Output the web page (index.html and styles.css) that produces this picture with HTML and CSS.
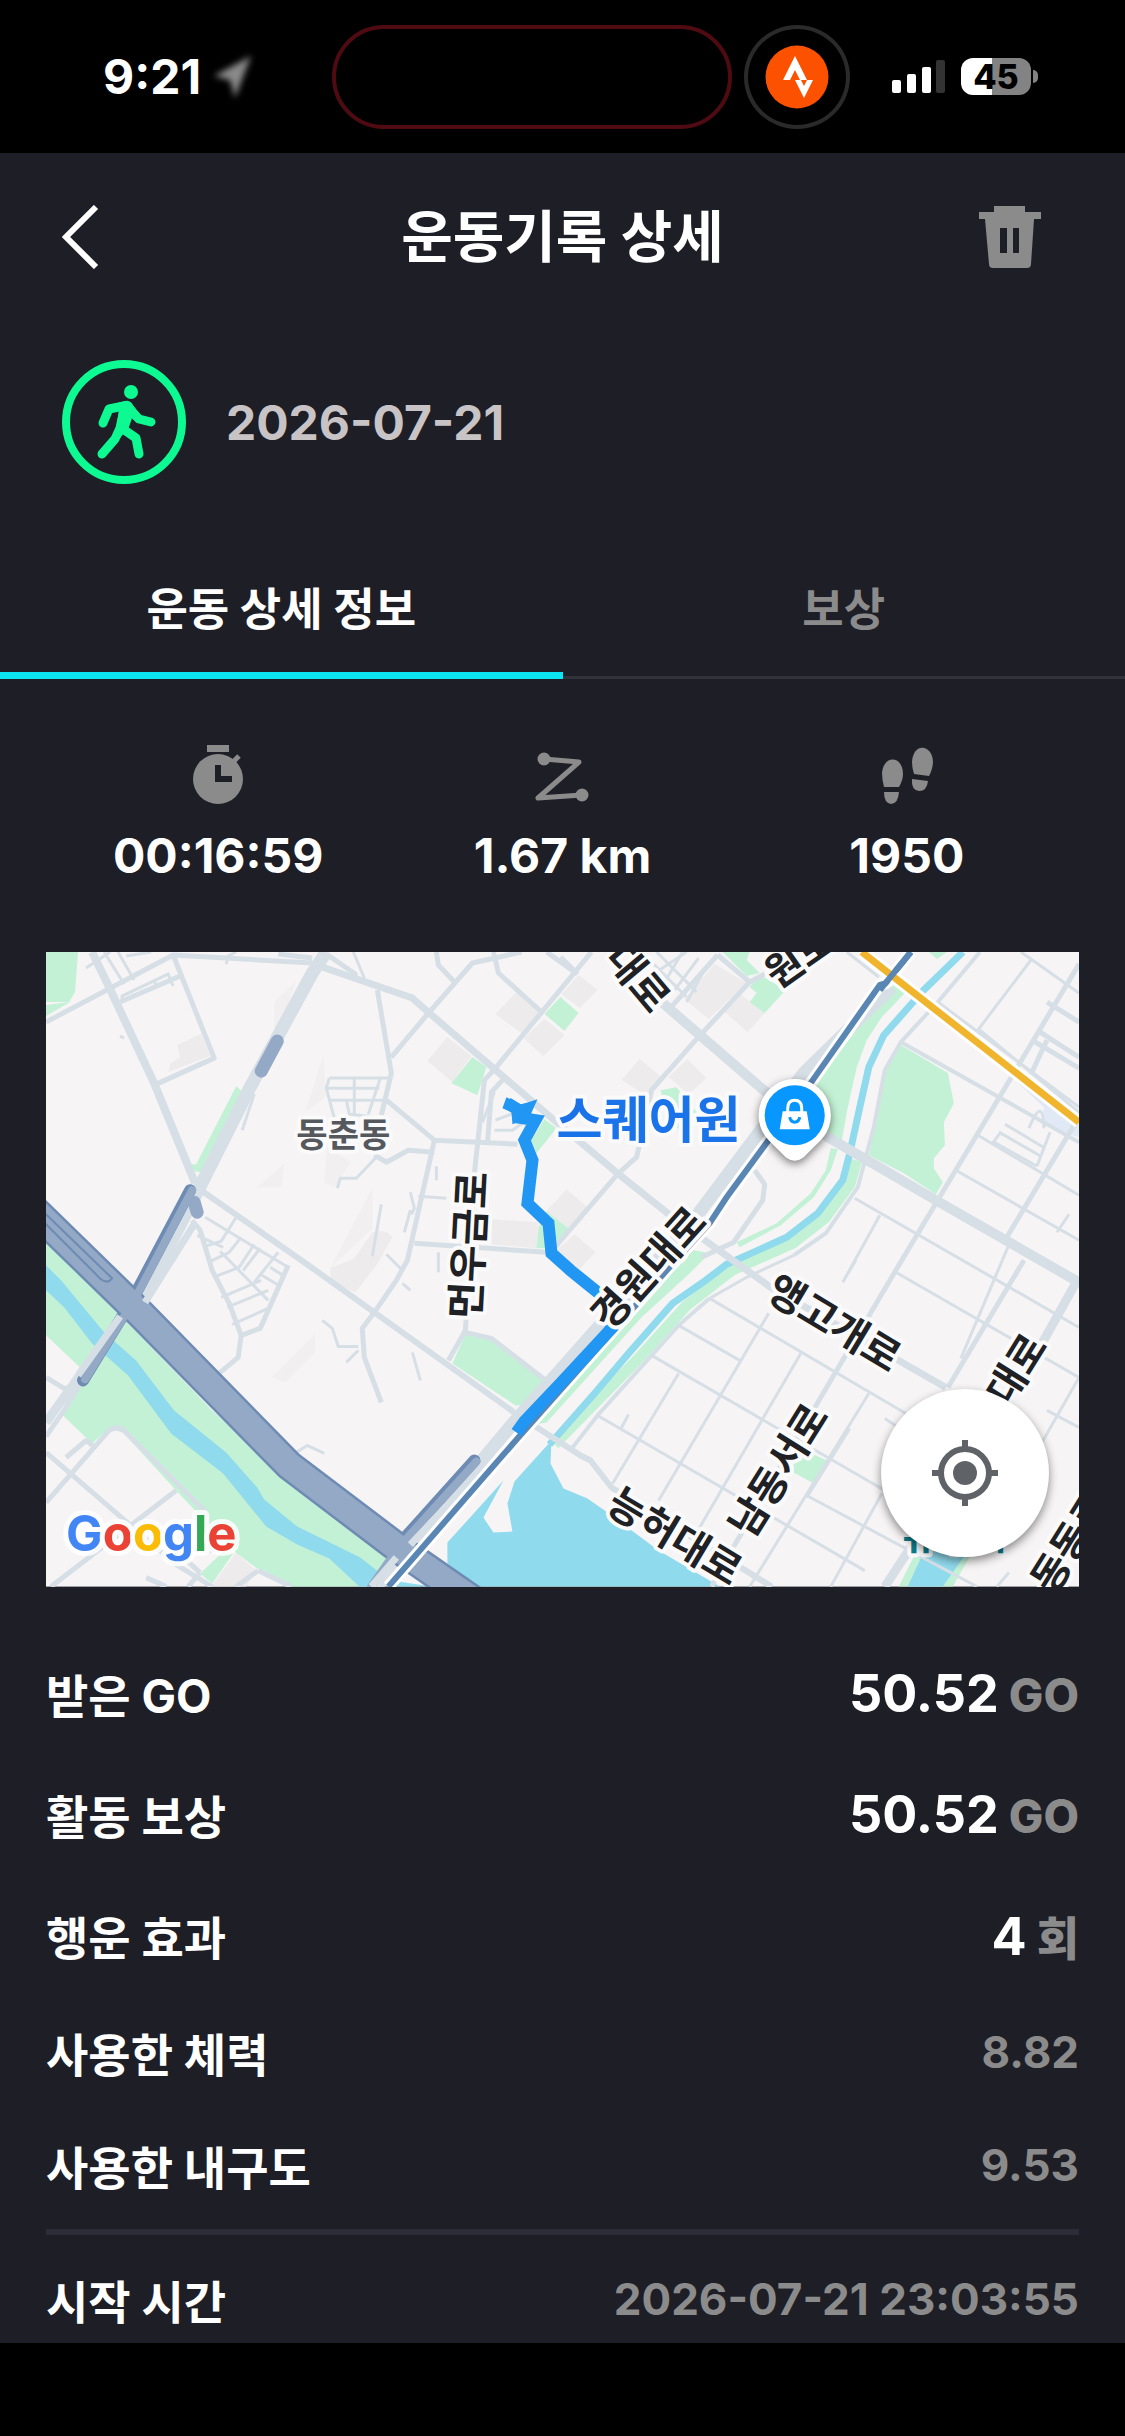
FILE: index.html
```html
<!DOCTYPE html>
<html lang="ko">
  <head>
    <meta charset="UTF-8" />
    <meta name="viewport" content="width=device-width, initial-scale=1.0" />
    <title>운동기록 상세</title>
    <link rel="stylesheet" href="styles.css">
  </head>
  <body>
    <div class="status-bar">
      <div class="clock">
        <span>9:21</span>
        <svg class="location" width="44" height="48" viewBox="0 0 44 48">
          <path d="M40 3L24 45L19 27L3 23Z" fill="#8a8a8a" />
        </svg>
      </div>
      <div class="island-group">
        <div class="island"></div>
        <div class="live-activity">
          <svg width="64" height="64" viewBox="0 0 64 64">
            <circle cx="32" cy="32" r="31.5" fill="#fc5200" />
            <path d="M30 11L42 35H35L30 25L25 35H18Z" fill="#fff" />
            <path d="M30 35H36L39 41L42 35H48L39 53Z" fill="#fff" />
          </svg>
        </div>
      </div>
      <div class="indicators">
        <svg width="54" height="36" viewBox="0 0 54 36">
          <rect x="0" y="21" width="9" height="13" rx="2" fill="#fff" />
          <rect x="15" y="15" width="9" height="19" rx="2" fill="#fff" />
          <rect x="30" y="8" width="9" height="26" rx="2" fill="#fff" />
          <rect x="44" y="1" width="9" height="33" rx="2" fill="#333" />
        </svg>
        <div class="battery">45</div>
      </div>
    </div>

    <main class="screen">
      <header class="header">
        <button class="icon-btn" aria-label="뒤로">
          <svg width="62" height="64" viewBox="0 0 62 64">
            <path d="M34 2L4 32L34 62" fill="none" stroke="#fff" stroke-width="6" />
          </svg>
        </button>
        <h1>운동기록 상세</h1>
        <button class="icon-btn delete-btn" aria-label="삭제">
          <svg width="62" height="62" viewBox="0 0 62 62">
            <path d="M15 0H46V6H62V13H55L52 58Q52 62 48 62H14Q10 62 10 58L6 13H0V6H15ZM21 22V47H28V22ZM34 22V47H40V22Z" fill="#8b8b8b" fill-rule="evenodd" />
          </svg>
        </button>
      </header>

      <section class="activity">
        <svg width="124" height="124" viewBox="0 0 124 124">
          <circle cx="62" cy="62" r="58" fill="none" stroke="#0df992" stroke-width="8" />
          <circle cx="69" cy="32" r="7" fill="#0df992" />
          <path d="M48 45L63 41Q68 40 71 45L77 53L70 58L67 67L58 78L54 70L57 50L48 52Z" fill="#0df992" />
          <g fill="none" stroke="#0df992" stroke-width="9" stroke-linecap="round" stroke-linejoin="round">
            <path d="M62 46L47 49L41 63" />
            <path d="M66 48L77 59L89 62" />
            <path d="M62 50L58 68L53 79L40 94" />
            <path d="M61 69L74 78L77 94" />
          </g>
        </svg>
        <time class="date" datetime="2026-07-21">2026-07-21</time>
      </section>

      <nav class="tabs">
        <button class="tab active">운동 상세 정보</button>
        <button class="tab">보상</button>
      </nav>

      <section class="stats">
        <div class="stat">
          <svg width="64" height="64" viewBox="0 0 64 64" fill="#8b8b8b">
            <rect x="21" y="3" width="22" height="7" />
            <path d="M46 21L53 14" stroke="#8b8b8b" stroke-width="5" />
            <circle cx="32" cy="37" r="25" />
            <path d="M29 23H35V34H46V40H29Z" fill="#1e1e26" />
          </svg>
          <span>00:16:59</span>
        </div>
        <div class="stat">
          <svg width="64" height="64" viewBox="0 0 64 64" fill="#8b8b8b">
            <path d="M14 17L49 20L8 56L52 53" fill="none" stroke="#8b8b8b" stroke-width="5" stroke-linejoin="round" />
            <circle cx="14" cy="17" r="6.5" />
            <circle cx="52" cy="53" r="6.5" />
          </svg>
          <span>1.67 km</span>
        </div>
        <div class="stat">
          <svg width="64" height="64" viewBox="0 0 64 64" fill="#8b8b8b">
            <path d="M9 45Q7 37 7 31C8 13 28 13 28 32Q28 38 24 45Z" />
            <path d="M9 50H24Q23 62 16 62Q9 61 9 50Z" />
            <path d="M39 32Q37 26 37 20C38 0 58 2 58 21Q57 29 54 34Z" />
            <path d="M37 37L53 39Q52 49 44 49Q36 48 37 37Z" />
          </svg>
          <span>1950</span>
        </div>
      </section>

      <section class="map">
        <svg class="map-canvas" viewBox="0 0 1032 634" role="img" aria-label="운동 경로 지도">
          <rect width="1032" height="634" fill="#f6f4f5" />

          <!-- buildings and hills -->
          <g fill="#edebec">
            <path d="M470 40L494 63L476 82L449 62ZM498 67L518 83L497 104L477 86ZM401 85L425 104L406 130L381 109ZM131 93L155 82L164 104L122 120L124 112L134 105Z" />
            <path d="M532 23L551 38L533 56L515 42ZM668 12L700 31L662 67L638 47ZM695 43L718 61L701 80L678 60ZM593 107L615 125L599 143L575 128ZM641 107L660 126L642 142L622 125Z" />
            <path d="M520 237L541 255L522 276L500 259ZM528 282L549 300L532 318L508 300ZM445 267L492 270L490 296L445 292Z" />
            <path d="M326 280Q340 276 346 285L331 312L309 340L285 330L284 316L308 306ZM190 600L210 618L200 634L165 634Z" />
          </g>
          <g fill="#f1eff0">
            <path d="M277 104L280 144L259 160ZM249 30L228 50V80L240 60ZM238 212L235 235H211ZM281 195L304 210L288 235L278 230ZM326 236L326 276L284 316ZM269 382V400L239 430L226 425Z" />
          </g>
          <path d="M965 125L1032 158V185L1014 180L994 168L997 155Z" fill="#e1e8f6" />

          <!-- parks -->
          <g fill="#c3f1d5">
            <path d="M0 0H32L29 40L23 50H0ZM0 53L24 50L0 64Z" />
            <path d="M190 134L197 140L154 220L144 218L109 136L142 212L150 212Z" />
            <path d="M514 45L532 61L518 79L498 62ZM426 105L440 115L431 143L405 131ZM498 167L510 176L490 201L485 188ZM500 259L523 277L504 296H490L492 275Z" />
            <path d="M676 0H703L700 8L713 21L700 24ZM707 30L717 25L739 38L718 61L703 50L710 41L703 35ZM614 138L630 135L650 160L640 185L620 165Z" />
            <path d="M849 30L859 40L835 65L820 88L810 115L801 155L795 188L781 181L767 131ZM882 0H900L890 7Z" />
            <path d="M784 196L791 197L784 218L767 245L734 273L693 295L690 290L730 271L764 241L779 218Z" />
            <path d="M854 93L901 121L907 151L897 170L898 193L887 206V216L896 230L889 242L857 221L822 203L827 178L838 118Z" />
            <path d="M419 382L445 388L499 428L476 453H469L406 411ZM747 508L767 502L780 508L767 531L747 520Z" />
            <path d="M874 590L925 600L906 634H852Z" />
            <path d="M0 280L73 361L87 376L166 458L239 526L340 603L333 634H245L218 618L211 616L187 598L130 538L77 480L63 476L46 491L15 461L34 415L0 383ZM154 621L166 631L187 601L178 598Z" />
            <path d="M647 298L663 301L642 322L595 365L565 398L500 470L488 472L565 383L625 315Z" />
          </g>
          <path d="M810 208L803 232L778 266L746 291L685 318L640 353L592 406L508 492" fill="none" stroke="#c3f1d5" stroke-width="11" />

          <!-- water -->
          <g fill="#90daed">
            <path d="M0 313L15 328L58 380L90 408L128 458L180 500L211 535L218 547L251 574L314 605L333 620L325 634H313L283 606L251 592L220 574L177 521L125 481L82 423L46 391L18 355L0 338Z" />
            <path d="M505 488L504 511L517 536L541 546L561 560L612 598L673 634H430L401 611V590L457 528L437 565L447 580L466 579L461 551L468 529ZM352 629L385 634H350Z" />
            <path d="M881 590L920 600L896 634H861Z" />
          </g>
          <path d="M916 0L877 38L837 83L822 115L813 155L803 201L796 228L771 261L740 285L680 312L659 328L626 351L582 401L548 441L503 492" fill="none" stroke="#90daed" stroke-width="7" />

          <!-- minor streets -->
          <g fill="none" stroke="#d7dfe6" stroke-width="3">
            <path d="M283 126H345M280 136H333M283 148H340M308 126V162M283 126L280 136L288 166M334 126L322 162M300 148L303 162L322 164" />
            <path d="M159 265L242 315M151 283L177 295M159 294L175 289L190 265M162 310L183 300L195 285M167 325L193 315L208 292M175 345L215 328M181 355L222 338M186 372L222 356M174 299L222 348M197 318L214 296M208 330L232 300M214 322L234 334M224 315L238 324" />
            <path d="M58 0L78 32M72 0L88 28M40 16L64 0M80 4L105 0M76 50V44L122 22L127 34M108 29L112 36M180 12L182 4L190 0M307 0L318 26M196 178L208 142M390 228V214M335 252L326 304M364 258L358 280M291 236L294 226L310 226L330 205M372 244L400 246M364 240L368 256L365 262" />
            <path d="M276 368L286 376L292 394H312M300 410L312 398M250 500L261 493L278 501M366 400L374 428M340 302L356 318M356 331L364 338M74 84L78 86M392 300V320" />
            <path d="M600 5L640 45M610 0L650 40M636 0L618 30M652 6L628 38M660 14L640 50M610 20L640 0M448 140L436 170M449 168L475 158M448 178H466L480 168" />
            <path d="M984 8L931 78M974 0L1032 41M891 50L1032 155M933 78L1032 160M800 0L832 25M817 0L850 20M954 180L945 192M947 190L990 214M952 180L994 204M958 172L998 196M990 214L1003 180M982 176Q996 142 997 176" />
            <path d="M808 246L1032 375M663 346L859 461M632 373L693 408M605 403L838 538M551 463L818 618M909 218L1032 288M849 320L1032 425M931 183L1032 243M853 476L838 466M693 615L725 634M760 543L930 634M1000 458L1032 475" />
            <path d="M833 263L796 330M722 361L612 548M754 401L653 575M822 441L703 634M632 421L566 531M835 541L784 634M1032 425L995 490M582 462L574 477M803 476L760 545M963 290L914 406M1022 262L1010 280M809 308L796 330M747 303L700 325L663 346M962 620L950 634" />
          </g>

          <!-- streets -->
          <g fill="none" stroke="#d7dfe6" stroke-width="5" stroke-linejoin="round">
            <path d="M0 70L127 3L266 11M127 3L168 106L108 133M232 2L266 6M280 2L309 22V28M74 50L134 24" />
            <path d="M331 38L345 121L335 163M475 0L426 11L382 61L345 105M390 0L392 13L409 31M447 0L452 21L495 60M500 0L531 22M545 0L449 116L438 128L428 221L419 378L402 408" />
            <path d="M340 148L388 188L471 192M388 188L361 308L350 328L328 360L316 376L318 405L335 450M388 200L362 198L340 210L328 203M368 291L500 300M441 192L445 140L456 128" />
            <path d="M242 313L214 376L195 383L192 405L168 425M146 268L154 278L166 318L183 351L195 383" />
            <path d="M703 30L649 88L605 138L590 205L571 222L504 300M671 3L703 30L718 22M671 3L620 60M514 5L531 22M708 218L718 232L716 248L687 290L655 305" />
            <path d="M933 0L891 50L854 90L838 118L827 175L811 235L779 281L747 303M663 346L632 373L551 463L526 495M854 90L1032 190" stroke-width="4" />
            <path d="M1032 12L849 318L771 450L683 601L665 634M1032 165L958 288M977 308L901 435M1000 50L1032 70M990 78L1032 105M985 88L1032 116M1000 88L984 122" />
            <path d="M419 380L445 386L502 430M0 484L20 455L34 431M0 425L18 436L34 434M0 550L63 478Q72 472 80 480L160 560L166 600M0 500L130 612L166 634M130 538L5 634M154 620L110 580M212 618L190 634M212 618L245 634M100 625L120 634M154 620L142 634M20 505L40 488L48 494" />
          </g>

          <!-- main roads -->
          <g fill="none" stroke="#d7dfe6" stroke-width="8" stroke-linejoin="round">
            <path d="M46 0L63 35L108 131L149 231" />
            <path d="M280 0L266 21L204 135L152 238L96 345" stroke-width="13" />
            <path d="M270 13L366 46L383 61L510 170L571 221L626 265L724 335L899 435" stroke-width="7" />
            <path d="M152 236L265 315L472 463L534 503L544 508L565 535L725 634" stroke-width="6" />
            <path d="M615 50L717 138L781 185L889 248L1032 330" stroke-width="10" />
            <path d="M845 35L757 121L649 265L469 468L330 634" stroke-width="13" />
            <path d="M1032 325L980 418L838 634" stroke-width="9" />
            <path d="M76 364L0 470" stroke-width="9" />
          </g>

          <!-- expressway -->
          <g fill="none" stroke-linecap="round" stroke-linejoin="round">
            <path d="M-20 250L94 361L243 513L355 598L430 650" stroke="#6e8bb3" stroke-width="31" />
            <path d="M144 238L86 348L37 428M428 508L357 587" stroke="#6e8bb3" stroke-width="12" />
            <path d="M148 250L151 260M231 89L215 119" stroke="#93a9c6" stroke-width="13" />
            <path d="M-20 250L94 361L243 513L355 598L430 650" stroke="#93a9c6" stroke-width="26" />
            <path d="M146 238L88 348L39 427M430 509L352 595L325 634" stroke="#93a9c6" stroke-width="8" />
            <path d="M-10 262L50 322Q60 334 66 326L0 262" stroke="#6e8bb3" stroke-width="2" />
            <path d="M148 272L99 350M74 364L32 423M350 605L325 634M432 520L364 592" stroke="#d7dfe6" stroke-width="7" stroke-linecap="butt" />
          </g>

          <!-- railway and highway -->
          <g fill="none">
            <path d="M864 0L839 31L833 33L766 128L680 245L663 271L622 316L471 486L342 634" stroke="#fff" stroke-width="12" />
            <path d="M864 0L839 31L833 33L766 128L680 245L663 271L622 316L471 486L342 634" stroke="#5a86b4" stroke-width="6" />
            <path d="M815 0L1032 170" stroke="#fff" stroke-width="13" />
            <path d="M815 0L1032 170" stroke="#f0b52d" stroke-width="7" />
            <path d="M864 0L833 38" stroke="#5a86b4" stroke-width="6" />
          </g>

          <!-- walked route -->
          <path d="M461 151L474 159L480 157L476 166L489 168L478 188L486 208L481 251L502 271L505 301L524 318L556 344L565 376L514 431L478 469L470 480" fill="none" stroke="#2196f3" stroke-width="12" />
          <path d="M460 145L474 152L484 150L478 158L492 165L476 168L466 172L465 160L456 156Z" fill="#2196f3" />

          <g class="map-labels">
            <text class="area" x="297" y="195">동춘동</text>
            <text transform="translate(423 293) rotate(-87)" y="14">먼우금로</text>
            <text transform="translate(602 316) rotate(-48)" y="14">경원대로</text>
            <text transform="translate(787 371) rotate(31)" y="14">앵고개로</text>
            <text transform="translate(732 518) rotate(-58)" y="14">남동서로</text>
            <text transform="translate(628 584) rotate(31)" y="14">능허대로</text>
            <text transform="translate(970 417) rotate(-58)" y="14">대로</text>
            <text transform="translate(1024 589) rotate(-58)" y="14">동동로</text>
            <text transform="translate(591 26) rotate(50)" y="14">대로</text>
            <text transform="translate(753 5) rotate(-35)" y="14">원로</text>
            <text class="water" x="908" y="596">유수지</text>
            <text class="place" x="602" y="186">스퀘어원</text>
          </g>

          <g class="pin">
            <path d="M748 127A36 36 0 0 1 774 188L757 205Q748 212 739 205L722 188A36 36 0 0 1 748 127Z" fill="#fff" />
            <circle cx="748" cy="163" r="30" fill="#0896ff" />
            <path d="M736 159H760L763 177H733Z" fill="#fff" />
            <path d="M741 160V156Q741 148 748 148Q755 148 755 156V160" fill="none" stroke="#fff" stroke-width="3" />
            <path d="M743 165Q744 170 748 170Q752 170 753 165" fill="none" stroke="#0896ff" stroke-width="3" />
          </g>

          <text class="google" x="20" y="598"><tspan fill="#4285f4">G</tspan><tspan fill="#ea4335">o</tspan><tspan fill="#fbbc05">o</tspan><tspan fill="#4285f4">g</tspan><tspan fill="#34a853">l</tspan><tspan fill="#ea4335">e</tspan></text>
        </svg>
        <button class="locate-btn" aria-label="내 위치">
          <svg width="66" height="66" viewBox="0 0 66 66">
            <circle cx="33" cy="33" r="12" fill="#5f6368" />
            <circle cx="33" cy="33" r="24" fill="none" stroke="#5f6368" stroke-width="6" />
            <path d="M33 0V10M33 56V66M0 33H10M56 33H66" stroke="#5f6368" stroke-width="6" />
          </svg>
        </button>
      </section>

      <dl class="details">
        <div class="row">
          <dt>받은 GO</dt>
          <dd class="amount"><strong>50.52</strong> GO</dd>
        </div>
        <div class="row">
          <dt>활동 보상</dt>
          <dd class="amount"><strong>50.52</strong> GO</dd>
        </div>
        <div class="row">
          <dt>행운 효과</dt>
          <dd class="amount"><strong>4</strong> 회</dd>
        </div>
        <div class="row small">
          <dt>사용한 체력</dt>
          <dd>8.82</dd>
        </div>
        <div class="row small">
          <dt>사용한 내구도</dt>
          <dd>9.53</dd>
        </div>
        <div class="row small start">
          <dt>시작 시간</dt>
          <dd>2026-07-21 23:03:55</dd>
        </div>
      </dl>
    </main>
  </body>
</html>
```
FILE: styles.css
```css
* {
  margin: 0;
  padding: 0;
  box-sizing: border-box;
  font-family: "Inter", "Noto Sans CJK KR", sans-serif;
}

body {
  min-height: 100vh;
  background: #000;
  color: #fff;
}

svg {
  display: block;
}

button {
  background: none;
  border: none;
  color: inherit;
  cursor: pointer;
}

.status-bar {
  height: 153px;
  padding: 0 87px 0 103px;
  display: grid;
  grid-template-columns: 1fr auto auto;
  align-items: center;
  gap: 42px;
}

.clock {
  display: flex;
  align-items: center;
  gap: 10px;
  font-size: 48px;
  font-weight: 700;
}

.location {
  filter: blur(3px);
}

.island-group {
  display: flex;
  gap: 12px;
}

.island {
  width: 400px;
  height: 104px;
  border: 4px solid #500b12;
  border-radius: 52px;
}

.live-activity {
  width: 106px;
  height: 104px;
  border: 4px solid #2a2a2a;
  border-radius: 50%;
  display: flex;
  align-items: center;
  justify-content: center;
}

.indicators {
  display: flex;
  align-items: center;
  gap: 15px;
}

.battery {
  position: relative;
  width: 70px;
  height: 37px;
  margin-right: 7px;
  border-radius: 12px;
  background: linear-gradient(90deg, #fff 45%, #838383 45%);
  color: #000;
  font-size: 34px;
  font-weight: 800;
  line-height: 37px;
  text-align: center;
}

.battery::after {
  content: "";
  position: absolute;
  top: 12px;
  right: -7px;
  width: 5px;
  height: 13px;
  border-radius: 0 6px 6px 0;
  background: #838383;
}

.screen {
  background: #1e1e26;
  margin-bottom: 93px;
}

.header {
  height: 168px;
  padding: 0 62px;
  display: grid;
  grid-template-columns: 1fr auto 1fr;
  align-items: center;
}

.header h1 {
  font-size: 56px;
  font-weight: 700;
  line-height: 80px;
}

.delete-btn {
  justify-self: end;
  margin-right: 22px;
}

.activity {
  padding: 39px 62px 50px;
  display: flex;
  align-items: center;
  gap: 40px;
}

.date {
  color: #c8c4c6;
  font-size: 48px;
  font-weight: 700;
}

.tabs {
  display: grid;
  grid-template-columns: 1fr 1fr;
}

.tab {
  height: 145px;
  padding-top: 3px;
  border-bottom: 3px solid #32323b;
  color: #8b8b8b;
  font-size: 45px;
  font-weight: 700;
}

.tab.active {
  padding-top: 6px;
  border-bottom: 7px solid #0ce5f2;
  color: #fff;
}

.stats {
  padding: 63px 46px 66px;
  display: grid;
  grid-template-columns: repeat(3, 1fr);
}

.stat {
  display: flex;
  flex-direction: column;
  align-items: center;
  gap: 20px;
  font-size: 48px;
  font-weight: 700;
  line-height: 60px;
}

.map {
  position: relative;
  margin: 0 46px;
}

.map-canvas {
  width: 100%;
  height: auto;
}

.map-labels text {
  fill: #202124;
  stroke: #fbfafb;
  stroke-width: 8px;
  stroke-linejoin: round;
  paint-order: stroke;
  font-size: 40px;
  font-weight: 700;
  text-anchor: middle;
}

.map-labels .area {
  fill: #55595e;
  font-size: 34px;
}

.map-labels .place {
  fill: #1a73e8;
  font-size: 50px;
}

.map-labels .water {
  fill: #0b7f8f;
  font-size: 38px;
}

.pin {
  filter: drop-shadow(0 3px 4px rgba(0, 0, 0, 0.5));
}

.google {
  font-family: "Lato", sans-serif;
  font-size: 49px;
  font-weight: 700;
  stroke: rgba(255, 255, 255, 0.8);
  stroke-width: 10px;
  stroke-linejoin: round;
  paint-order: stroke;
}

.locate-btn {
  position: absolute;
  right: 30px;
  bottom: 30px;
  width: 168px;
  height: 168px;
  border-radius: 50%;
  background: #fff;
  box-shadow: 0 4px 10px rgba(0, 0, 0, 0.45);
  display: flex;
  align-items: center;
  justify-content: center;
}

.details {
  padding: 46px 46px 0;
}

.row {
  height: 121px;
  display: flex;
  align-items: center;
  justify-content: space-between;
  font-size: 46px;
  font-weight: 700;
}

.row.small {
  height: 113px;
}

.row.start {
  height: 114px;
  margin-top: 7px;
  border-top: 6px solid #2c2c36;
  padding-top: 20px;
}

.row dd {
  color: #8b8b8b;
  font-size: 44px;
}

.row dd.amount {
  font-size: 46px;
  font-weight: 800;
}

.row strong {
  color: #fff;
  font-size: 52px;
  font-weight: 700;
}
```
